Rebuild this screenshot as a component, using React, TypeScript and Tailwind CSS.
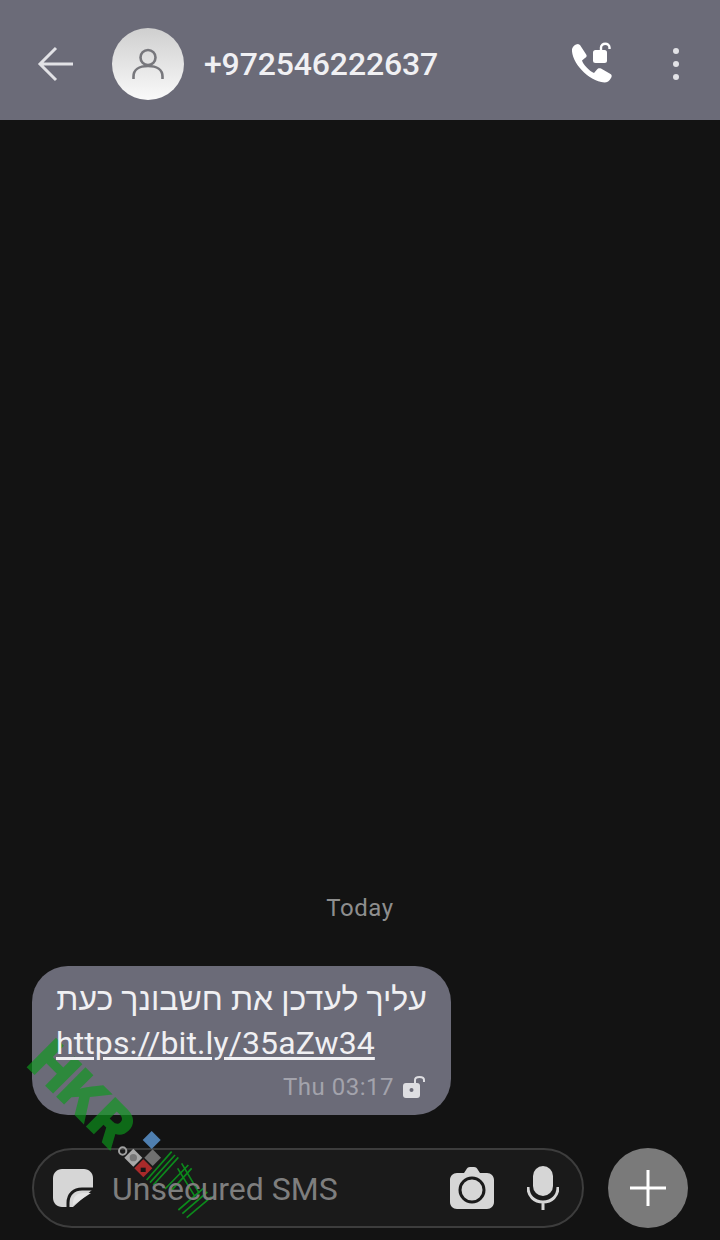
export default function App() {
  return (
    <div className="relative flex h-[1240px] w-[720px] flex-col overflow-hidden bg-[#131313] font-['Roboto','Noto_Sans',sans-serif]">
      <header className="flex h-[120px] shrink-0 items-center bg-[#6b6b78] pl-[36px] pr-[41px] pt-[8px]">
        <svg width="38" height="36" viewBox="0 0 38 36" fill="none" stroke="#e2e2e6" strokeWidth="3" className="ml-[1px] mr-[-1px]">
          <path d="M19 2 3 18l16 16M3 18h33" />
        </svg>
        <div className="ml-[38px] flex h-[72px] w-[72px] items-center justify-center rounded-full bg-gradient-to-b from-[#cfcfcf] to-[#fafafa]">
          <svg width="32" height="32" viewBox="0 0 32 32" fill="none" stroke="#77777c" strokeWidth="2.6">
            <circle cx="16" cy="9.5" r="7.5" />
            <path d="M1.5 31v-2.5C1.5 22 7 18 16 18s14.500 4 14.500 10.500V31" />
          </svg>
        </div>
        <div className="ml-[20px] flex-1 text-[32px] font-medium leading-none tracking-[-0.15px] text-[#f0f0f3]">+972546222637</div>
        <svg width="44" height="44" viewBox="0 0 44 44" className="mr-[59px]" fill="#ffffff">
          <path d="M2 7C3 4 5 2.500 8 2L10 3 16.500 13C17 14.500 16 15.500 15 16L12 18.500C13 22 19 29 24 31L27 27.500C28 26 29.500 26 31 26.500L40.500 32C42 33 42 34.500 41 36 39.500 39 37 40.500 34.500 40.500 18 39 1 20 2 7Z" />
          <rect x="23" y="8" width="14" height="13" rx="2.500" />
          <path d="M31 9V5.500c0-5 8.500-5 8.500 0V7" fill="none" stroke="#ffffff" strokeWidth="2.400" />
        </svg>
        <div className="flex flex-col gap-[7px]">
          <span className="h-[6px] w-[6px] rounded-full bg-[#e2e2e6]" />
          <span className="h-[6px] w-[6px] rounded-full bg-[#e2e2e6]" />
          <span className="h-[6px] w-[6px] rounded-full bg-[#e2e2e6]" />
        </div>
      </header>

      <main className="flex flex-1 flex-col justify-end px-[32px]">
        <div className="mb-[44px] text-center text-[24px] leading-[28px] tracking-[0.6px] text-[#8e8e8e]">Today</div>
        <div className="w-[419px] rounded-[36px] bg-[#6b6b78] px-[24px] pb-[14px] pt-[11px]">
          <div dir="rtl" className="relative z-10 text-[32px] leading-[44px] tracking-[0.04px] text-[#f0f0f3]">עליך לעדכן את חשבונך כעת</div>
          <div className="relative z-10 text-[32px] leading-[44px] tracking-[0.1px] text-[#f0f0f3] underline underline-offset-[3px]">https://bit.ly/35aZw34</div>
          <div className="mt-[8px] flex items-center justify-end pr-[1px]">
            <span className="text-[24px] leading-[28px] tracking-[0.5px] text-[#a3a3ac]">Thu 03:17</span>
            <svg width="24" height="24" viewBox="0 0 24 24" className="ml-[8px]" fill="#dedee2">
              <rect x="1" y="8" width="17" height="15" rx="3" />
              <path d="M13 8V5c0-4 9-4 9 0v2" fill="none" stroke="#dedee2" strokeWidth="2" />
              <circle cx="9.500" cy="15" r="2" fill="#6b6b78" />
            </svg>
          </div>
        </div>

        <div className="mb-[12px] mt-[33px] flex items-center">
          <div className="flex h-[80px] w-[552px] items-center rounded-full border-2 border-[#3d3d3d] bg-[#1a1a1a] pl-[19px]">
            <svg width="40" height="38" viewBox="0 0 40 38">
              <path d="M9 0h22c5 0 9 4 9 9v11L20 38H9c-5 0-9-4-9-9V9c0-5 4-9 9-9Z" fill="#d6d6d6" />
              <path d="M15 38v-4c0-9 6-14 14-14h11" fill="none" stroke="#1a1a1a" strokeWidth="3" />
              <path d="M20 36v-2c0-6 4-10 10-10h8Z" fill="#e4e4e4" />
            </svg>
            <span className="relative z-10 ml-[19px] mt-[2px] flex-1 text-[32px] leading-none text-[#7e7e7e]">Unsecured SMS</span>
            <svg width="44" height="42" viewBox="0 0 44 42" className="mr-[33px]">
              <path d="M7 6h7l2-3c1-2 2-3 4-3h4c2 0 3 1 4 3l2 3h7c4 0 7 3 7 7v22c0 4-3 7-7 7H7c-4 0-7-3-7-7V13c0-4 3-7 7-7Z" fill="#d6d6d6" />
              <circle cx="22" cy="23" r="12" fill="none" stroke="#1a1a1a" strokeWidth="3" />
            </svg>
            <svg width="32" height="44" viewBox="0 0 32 44" className="mr-[23px]">
              <rect x="6" y="0" width="20" height="30" rx="10" fill="#d6d6d6" />
              <path d="M1 21c0 9 6 15 15 15s15-6 15-15M16 36v8" fill="none" stroke="#d6d6d6" strokeWidth="3" />
            </svg>
          </div>
          <div className="ml-[24px] flex h-[80px] w-[80px] items-center justify-center rounded-full bg-[#7a7a7a]">
            <svg width="36" height="36" viewBox="0 0 36 36" stroke="#ffffff" strokeWidth="3">
              <path d="M18 0v36M0 18h36" />
            </svg>
          </div>
        </div>
      </main>

      <div className="pointer-events-none absolute left-[20px] top-[1065px] w-[124px] origin-center rotate-[45deg] whitespace-nowrap text-center font-['Inter',sans-serif] text-[57px] font-black leading-none tracking-[-1px] text-[#0c9a1c]/65">HKR</div>
      <svg width="110" height="100" viewBox="0 0 330 300" className="pointer-events-none absolute left-[110px] top-[1125px]">
        <polygon points="125,18 152,45 125,72 98,45" fill="#4f7fb0" />
        <circle cx="38" cy="78" r="11" fill="none" stroke="#a0a0a0" strokeWidth="6" />
        <polygon points="70,71 97,98 70,125 43,98" fill="#a8a8a8" />
        <circle cx="70" cy="98" r="11" fill="#777777" />
        <polygon points="128,73 153,98 128,123 103,98" fill="#707070" />
        <polygon points="100,103 127,130 100,157 73,130" fill="#a82a2a" />
        <rect x="92" y="128" width="15" height="13" fill="#161616" />
        <g stroke="#0c8a1c" strokeWidth="5" fill="none">
          <path d="M110 165 185 80M120 173 195 90M130 180 205 97" />
          <path d="M165 192 235 120M178 203 245 130" />
          <path d="M215 115 268 205M203 130 255 215" />
          <path d="M205 255 280 190M217 266 292 201M230 278 305 215" />
        </g>
      </svg>
    </div>
  );
}
